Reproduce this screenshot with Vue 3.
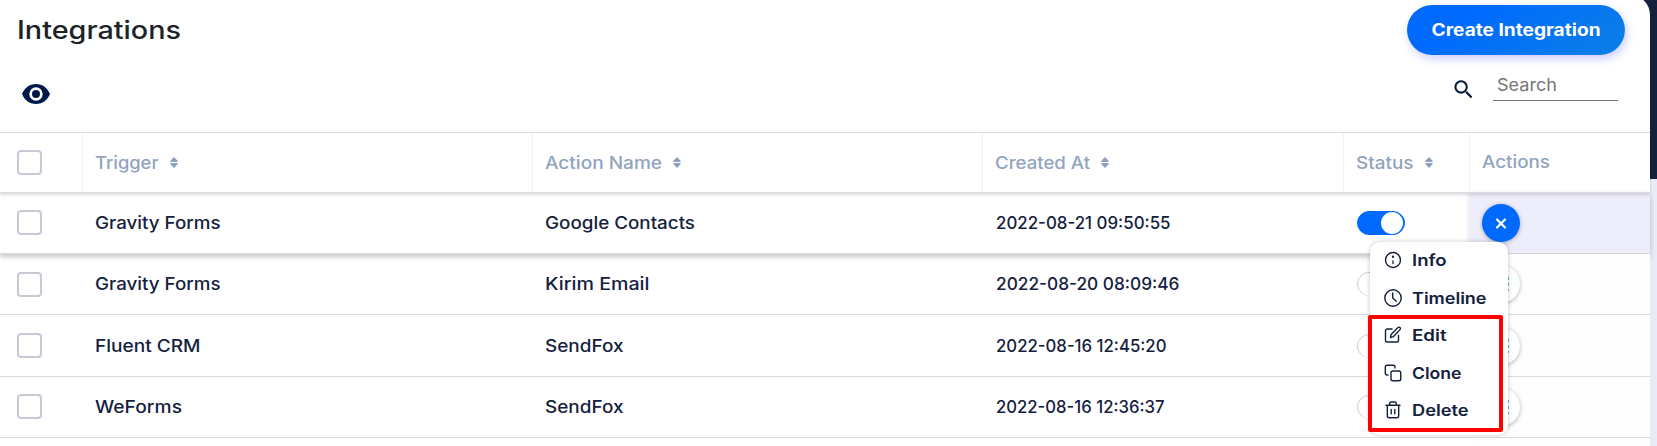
<script setup>
const columns = [
  { label: 'Trigger', width: 63.5 },
  { label: 'Action Name', width: 117 },
  { label: 'Created At', width: 95 },
  { label: 'Status', width: 57.5 },
]

const rows = [
  { trigger: ['Gravity Forms', 125.5], action: ['Google Contacts', 150], created: ['2022-08-21 09:50:55', 174.5], active: true },
  { trigger: ['Gravity Forms', 125.5], action: ['Kirim Email', 104.5], created: ['2022-08-20 08:09:46', 183.5] },
  { trigger: ['Fluent CRM', 105.5], action: ['SendFox', 78.5], created: ['2022-08-16 12:45:20', 170.5] },
  { trigger: ['WeForms', 87], action: ['SendFox', 78.5], created: ['2022-08-16 12:36:37', 168.5] },
]

const menu = [
  { icon: 'info', label: 'Info', width: 34.5 },
  { icon: 'clock', label: 'Timeline', width: 74.5 },
  { icon: 'edit', label: 'Edit', width: 34.5 },
  { icon: 'clone', label: 'Clone', width: 49.5 },
  { icon: 'trash', label: 'Delete', width: 56.5 },
]

// Widens a label's letterforms so it spans the given width.
const vFit = {
  mounted(el, { value }) {
    el.style.transform = `scaleX(${value / el.getBoundingClientRect().width})`
  },
}
</script>

<template>
  <div class="page">
    <main class="card">
      <header class="top">
        <h1 class="title"><span v-fit="164" class="fit">Integrations</span></h1>
        <button class="create"><span v-fit="169" class="fit center">Create Integration</span></button>
      </header>

      <div class="tools">
        <svg class="eye" viewBox="0 0 28 20">
          <path fill="#00194b" fill-rule="evenodd" d="M14 0C7.600 0 2.200 4.100 0 10c2.200 5.900 7.600 10 14 10s11.800-4.100 14-10C25.800 4.100 20.400 0 14 0zm0 16.700a6.700 6.700 0 1 1 0-13.400 6.700 6.700 0 0 1 0 13.400zM14 6a4 4 0 1 0 0 8 4 4 0 0 0 0-8z" />
        </svg>
        <div class="search">
          <svg class="glass" viewBox="0 0 18 18">
            <path fill="#0b1d3f" d="M12.900 11.300h-.8l-.3-.3a6.500 6.500 0 1 0-.7.7l.3.3v.8l5 5 1.500-1.500zm-6 0a4.500 4.500 0 1 1 0-9 4.500 4.500 0 0 1 0 9z" />
          </svg>
          <div class="field"><span v-fit="60" class="fit">Search</span></div>
        </div>
      </div>

      <section class="table">
        <div class="row head">
          <div class="cell check"><i class="box"></i></div>
          <div v-for="c in columns" :key="c.label" class="cell">
            <span class="slot" :style="{ width: c.width + 'px' }"><span v-fit="c.width" class="fit">{{ c.label }}</span></span>
            <svg class="sort" viewBox="0 0 8 11"><path fill="#8da2bd" d="M4 0 7.600 3.700Q8 5 7 5H1Q0 5 .4 3.700zM4 11 .4 7.300Q0 6 1 6h6q1 0 .6 1.300z" /></svg>
          </div>
          <div class="cell"><span v-fit="68" class="fit">Actions</span></div>
        </div>

        <div v-for="(r, i) in rows" :key="i" class="row" :class="['r' + i, { active: r.active }]">
          <div class="cell check"><i class="box"></i></div>
          <div class="cell"><span v-fit="r.trigger[1]" class="fit">{{ r.trigger[0] }}</span></div>
          <div class="cell"><span v-fit="r.action[1]" class="fit">{{ r.action[0] }}</span></div>
          <div class="cell date"><span v-fit="r.created[1]" class="fit">{{ r.created[0] }}</span></div>
          <div class="cell"><i class="toggle" :class="{ on: r.active }"><i class="knob"></i></i></div>
          <div class="cell actions">
            <button class="round" :class="{ open: r.active }">
              <svg v-if="r.active" viewBox="0 0 38 38"><path d="m15 15.500 8 8m0-8-8 8" stroke="#fff" stroke-width="2.200" stroke-linecap="round" /></svg>
              <svg v-else viewBox="0 0 38 38"><path d="M26 12v14" stroke="#58b4e5" stroke-width="2" stroke-dasharray="3 3" /></svg>
            </button>
          </div>
        </div>
        <div class="row last"><div class="cell"></div><div class="cell"></div><div class="cell"></div><div class="cell"></div><div class="cell"></div><div class="cell actions"></div></div>
      </section>
    </main>

    <nav class="menu">
      <div v-for="m in menu" :key="m.icon" class="item">
        <svg class="icon" viewBox="0 0 18 18" fill="none" stroke="#14213d" stroke-width="1.400" stroke-linecap="round" stroke-linejoin="round">
          <template v-if="m.icon === 'info'">
            <circle cx="9" cy="9" r="7.500" /><path d="M9 9.800v2.700" stroke-width="1.300" /><circle cx="9" cy="5.800" r=".5" fill="#14213d" />
          </template>
          <template v-else-if="m.icon === 'clock'">
            <circle cx="9" cy="9" r="8.200" /><path d="M8.700 4v5l3.500 3.200" />
          </template>
          <template v-else-if="m.icon === 'edit'">
            <path d="M8 3H3.300Q1.500 3 1.500 4.800v9.400Q1.500 16 3.300 16h9.400q1.800 0 1.800-1.800V9.500M6.500 11.500l.6-3L14 1.600q1-.9 2 0t0 2L9.300 10.700z" />
          </template>
          <template v-else-if="m.icon === 'clone'">
            <rect x="7" y="7" width="9.700" height="9.700" rx="1.800" /><path d="M4 11H3q-1.700 0-1.700-1.700V3Q1.300 1.300 3 1.300h6.300Q11 1.300 11 3v1" />
          </template>
          <template v-else>
            <path d="M2 4.300h14M5.700 4.300V2.600Q5.700 1 7.300 1h3.400q1.600 0 1.600 1.600v1.700M3.300 4.300v10.500q0 2 2 2h7.400q2 0 2-2V4.300M7.200 8.500v4.300M10.800 8.500v4.300" />
          </template>
        </svg>
        <span v-fit="m.width" class="fit">{{ m.label }}</span>
      </div>
    </nav>
    <div class="highlight"></div>
  </div>
</template>

<style>
body {
  background: #e9ebf8;
}
</style>

<style scoped>
* {
  box-sizing: border-box;
}
.page {
  position: relative;
  width: 1657px;
  height: 446px;
  overflow: hidden;
  background: linear-gradient(#14213d 179px, #e9ebf8 179px);
  font-family: Inter, 'Liberation Sans', sans-serif;
  color: #14213d;
}
.card {
  width: 1650px;
  height: 451px;
  margin-top: -5px;
  padding-top: 5px;
  background: #fff;
  border-top-right-radius: 20px;
}
.fit {
  display: inline-block;
  white-space: nowrap;
  transform-origin: 0 50%;
}
.fit.center {
  transform-origin: 50% 50%;
}
.top {
  display: flex;
  justify-content: space-between;
  height: 60px;
  padding: 5px 25px 0 17px;
}
.title {
  margin: 10px 0 0;
  font-size: 25px;
  line-height: 30px;
  font-weight: 500;
  color: #1d2327;
}
.create {
  width: 218px;
  height: 50px;
  padding: 0;
  border: 0;
  border-radius: 25px;
  background: linear-gradient(145deg, #006aff 25%, #0c7fe4);
  box-shadow: 2px 4px 9px rgba(80, 80, 255, 0.28);
  color: #fff;
  font: 700 17px/50px Inter, sans-serif;
}
.tools {
  display: flex;
  justify-content: space-between;
  height: 72px;
  padding: 0 32px 0 22px;
}
.eye {
  width: 28px;
  height: 20px;
  margin-top: 24px;
}
.search {
  display: flex;
}
.glass {
  width: 18.500px;
  height: 18.500px;
  margin: 20px 21px 0 0;
}
.field {
  width: 125px;
  height: 41px;
  padding: 15px 0 0 4px;
  border-bottom: 1px solid #767676;
  font-size: 17px;
  line-height: 20px;
  color: #757575;
}
.table {
  border-top: 1px solid #dadbe3;
}
.row {
  display: grid;
  grid-template-columns: 83px 450px 450px 361px 126px 180px;
  height: 61px;
  border-bottom: 1px solid #d9dae3;
  font-size: 17px;
  line-height: 20px;
  font-weight: 500;
}
.row.r2 {
  height: 62px;
}
.row.last {
  height: 8px;
  border: 0;
}
.cell {
  display: flex;
  align-items: center;
  padding-left: 12px;
}
.cell.check {
  padding-left: 17px;
}
.cell.date {
  padding-left: 12.500px;
}
.r0 .check,
.r3 .check {
  padding-bottom: 1px;
}
.head {
  position: relative;
  z-index: 1;
  height: 60px;
  color: #90a4c0;
  box-shadow: 0 2px 3px rgba(0, 0, 0, 0.14);
}
.head .cell {
  border-right: 1px solid #f0f0f4;
}
.head .cell:last-child {
  border: 0;
}
.head .fit {
  margin-top: -1px;
}
.head .slot {
  display: block;
}
.sort {
  width: 8px;
  height: 11px;
  margin-left: 11px;
}
.box {
  width: 25px;
  height: 25px;
  border: 2px solid #c6cad6;
  border-radius: 4px;
}
.active {
  box-shadow: 0 3px 5px rgba(0, 0, 0, 0.22);
}
.actions {
  background: #fefefe;
}
.active .actions {
  background: #eeedfb;
  box-shadow: -2px 0 3px rgba(0, 0, 0, 0.08);
}
.toggle {
  width: 48px;
  height: 24px;
  margin-left: 1px;
  padding: 1px;
  border: 1px solid #ccc;
  border-radius: 12px;
}
.toggle.on {
  padding: 0 0 0 23px;
  border-color: #006aff;
  background: #006aff;
}
.knob {
  display: block;
  width: 22px;
  height: 22px;
  border-radius: 50%;
  background: #fff;
}
.round {
  width: 38px;
  height: 38px;
  padding: 0;
  border: 0;
  border-radius: 50%;
  background: #fff;
  box-shadow: 0 1px 4px rgba(0, 0, 0, 0.3);
}
.round.open {
  background: #006aff;
}
.round svg {
  display: block;
}
.menu {
  position: absolute;
  z-index: 2;
  left: 1370px;
  top: 242px;
  width: 138px;
  height: 193px;
  border-radius: 10px;
  background: #fff;
  box-shadow: 0 0 5px rgba(0, 0, 0, 0.22);
  font-size: 16px;
  line-height: 20px;
  font-weight: 600;
}
.item {
  display: flex;
  align-items: center;
  gap: 9.500px;
  height: 37.500px;
  padding: 0 0 1px 14px;
}
.icon {
  width: 18px;
  height: 18px;
}
.highlight {
  position: absolute;
  z-index: 3;
  left: 1368px;
  top: 315px;
  width: 135px;
  height: 117px;
  border: 4px solid #f00;
  border-radius: 2px;
}
</style>
